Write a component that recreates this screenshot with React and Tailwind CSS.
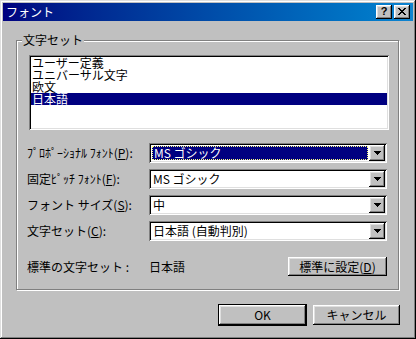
import React from 'react';

// Win9x style 3D edges
const sunken = 'shadow-[inset_1px_1px_#808080,inset_-1px_-1px_#fff,inset_2px_2px_#000,inset_-2px_-2px_#dfdfdf]';
const raised = 'shadow-[inset_-1px_-1px_#000,inset_1px_1px_#fff,inset_-2px_-2px_#808080,inset_2px_2px_#dfdfdf]';

const DownArrow = () => (
  <svg width="7" height="4" viewBox="0 0 7 4" shapeRendering="crispEdges">
    <path d="M0 0h7v1H0zM1 1h5v1H1zM2 2h3v1H2zM3 3h1v1H3z" fill="#000" />
  </svg>
);

const Combo = ({ value, focused }) => (
  <div className={`w-[238px] h-[20px] bg-white p-[2px] flex ${sunken}`}>
    <div className="flex-1 flex items-center pr-[1px]">
      {focused ? (
        <div className="flex-1 h-[14px] ml-[1px] bg-[#000080] text-white border border-dotted border-[#ffff80] leading-[12px] pl-[1px]">
          {value}
        </div>
      ) : (
        <span className="pl-[2px] leading-[14px]">{value}</span>
      )}
    </div>
    <div className={`w-[16px] h-[16px] bg-[#c0c0c0] flex items-center justify-center ${raised}`}>
      <DownArrow />
    </div>
  </div>
);

const Row = ({ label, children }) => (
  <div className="flex items-center">
    <div className="w-[122px] leading-[14px] whitespace-nowrap">{label}</div>
    {children}
  </div>
);

const App = () => {
  const charsets = ['ユーザー定義', 'ユニバーサル文字', '欧文', '日本語'];
  const selected = 3;

  return (
    <div className="w-[416px] h-[339px] bg-[#c0c0c0] p-[3px] text-[12px] text-black font-['Noto_Sans_CJK_JP',sans-serif] shadow-[inset_-1px_-1px_#000,inset_1px_1px_#dfdfdf,inset_-2px_-2px_#808080,inset_2px_2px_#fff]">
      {/* title bar */}
      <div className="h-[18px] flex items-center justify-between pl-[3px] pr-[3px] bg-linear-to-r from-[#000080] to-[#1084d0]">
        <span className="text-white leading-[14px]">フォント</span>
        <div className="flex gap-[2px]">
          <div className={`w-[16px] h-[14px] bg-[#c0c0c0] flex items-center justify-center ${raised}`}>
            <span className="font-['Liberation_Sans',sans-serif] font-bold text-[11px] leading-none mt-[-1px]">?</span>
          </div>
          <div className={`w-[16px] h-[14px] bg-[#c0c0c0] flex items-center justify-center ${raised}`}>
            <svg width="8" height="7" viewBox="0 0 8 7" shapeRendering="crispEdges" className="mt-[-1px]">
              <path d="M0 0h2v1H0zM6 0h2v1H6zM1 1h2v1H1zM5 1h2v1H5zM2 2h4v1H2zM3 3h2v1H3zM2 4h4v1H2zM1 5h2v1H1zM5 5h2v1H5zM0 6h2v1H0zM6 6h2v1H6z" fill="#000" />
            </svg>
          </div>
        </div>
      </div>

      {/* charset group */}
      <div className="ml-[13px] mt-[19px] relative w-[383px] h-[250px] border border-[#808080] shadow-[1px_1px_0_#fff,inset_1px_1px_0_#fff] pl-[10px] pt-[14px]">
        <span className="absolute left-[5px] top-[-8px] px-[1px] bg-[#c0c0c0] leading-[14px]">文字セット</span>

        <div className={`ml-[2px] w-[360px] h-[75px] bg-white p-[2px] ${sunken}`}>
          {charsets.map((c, i) => (
            <div
              key={c}
              className={`h-[12px] leading-[12px] pl-[1px] ${i === selected ? 'bg-[#000080] text-white' : ''}`}
            >
              {c}
            </div>
          ))}
        </div>

        <div className="mt-[13px] flex flex-col gap-[6px]">
          <Row label={<>ﾌﾟﾛﾎﾟｰｼｮﾅﾙ ﾌｫﾝﾄ(<u>P</u>):</>}>
            <Combo value="MS ゴシック" focused />
          </Row>
          <Row label={<>固定ﾋﾟｯﾁ ﾌｫﾝﾄ(<u>F</u>):</>}>
            <Combo value="MS ゴシック" />
          </Row>
          <Row label={<>フォント サイズ(<u>S</u>):</>}>
            <Combo value="中" />
          </Row>
          <Row label={<>文字セット(<u>C</u>):</>}>
            <Combo value="日本語 (自動判別)" />
          </Row>
        </div>

        <div className="mt-[16px] w-[360px] flex items-center">
          <div className="w-[122px] leading-[14px]">標準の文字セット :</div>
          <span className="leading-[14px]">日本語</span>
          <button className={`ml-auto w-[99px] h-[19px] bg-[#c0c0c0] leading-[14px] ${raised}`}>
            標準に設定(<u>D</u>)
          </button>
        </div>
      </div>

      {/* dialog buttons */}
      <div className="mt-[14px] pr-[12px] flex justify-end items-center gap-[5px]">
        <div className="w-[89px] h-[22px] border border-black">
          <button className={`w-full h-full bg-[#c0c0c0] leading-[14px] ${raised}`}>OK</button>
        </div>
        <div className="w-[89px] h-[22px] p-[1px]">
          <button className={`w-full h-full bg-[#c0c0c0] leading-[14px] ${raised}`}>キャンセル</button>
        </div>
      </div>
    </div>
  );
};

export default App;
